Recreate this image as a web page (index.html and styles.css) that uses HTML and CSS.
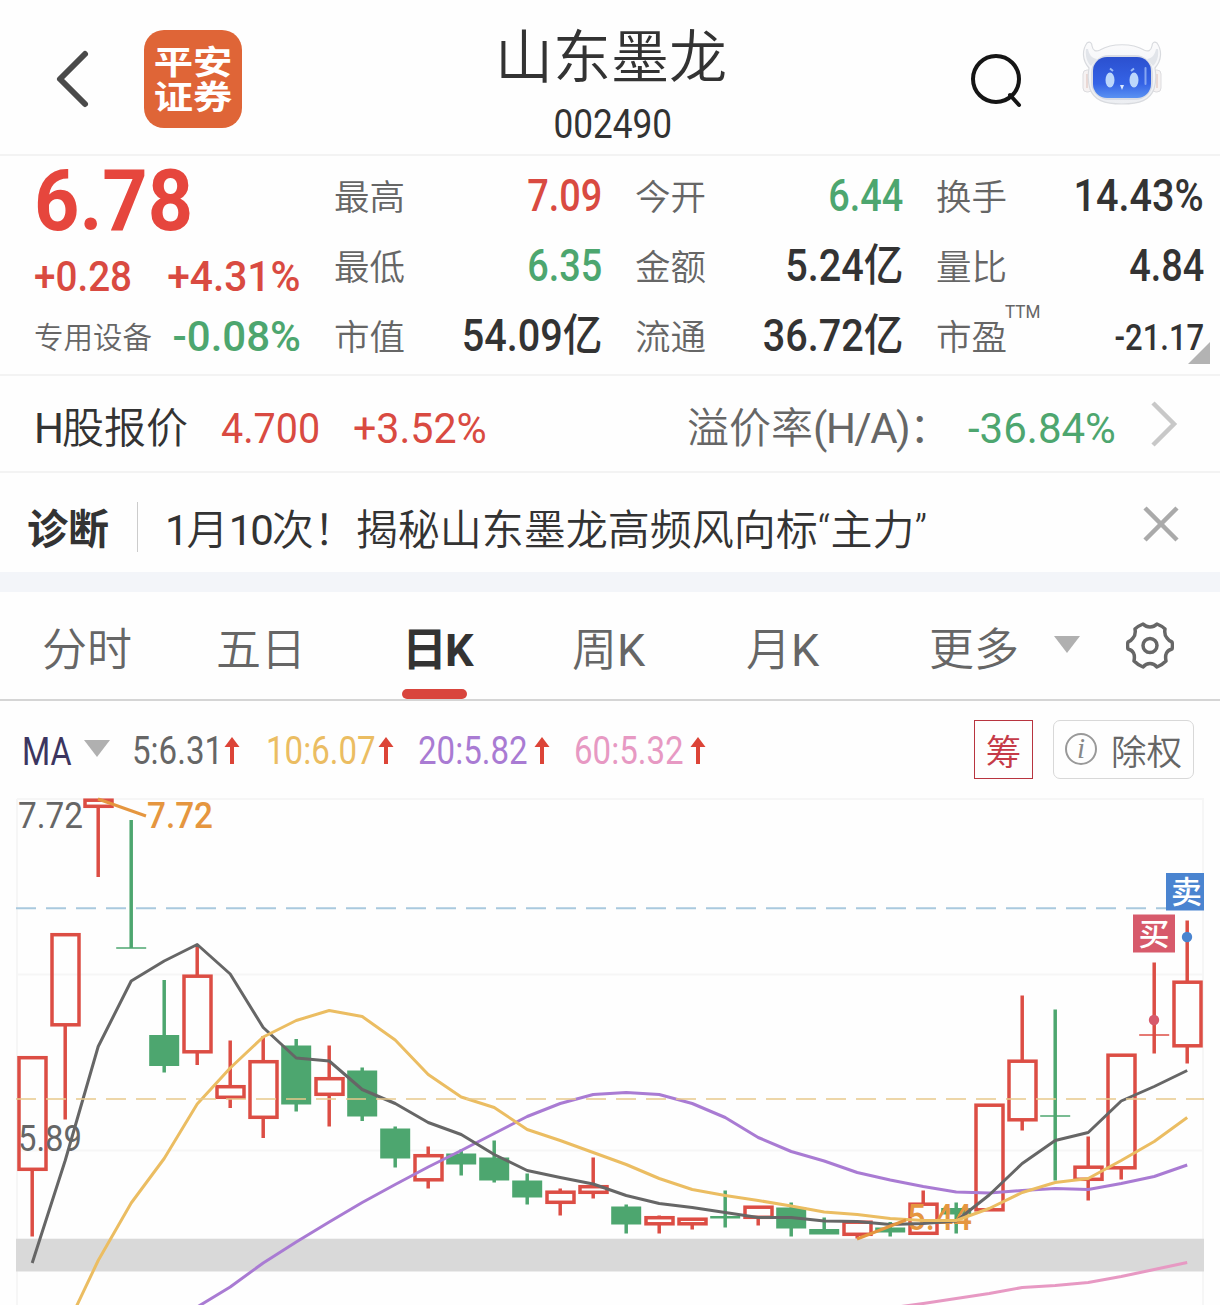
FILE: index.html
```html
<!DOCTYPE html>
<html lang="zh-CN">
<head>
  <meta charset="UTF-8">
  <title>山东墨龙 002490</title>
  <link rel="stylesheet" href="styles.css">
</head>
<body>
  <header class="header">
    <svg class="back" viewBox="0 0 40 64">
      <path d="M33 7 L8 32 L33 57" fill="none" stroke="#4a4a4a" stroke-width="6" stroke-linecap="round" stroke-linejoin="round"/>
    </svg>
    <div class="broker"><span>平安证券</span></div>
    <div class="title">
      <h1>山东墨龙</h1>
      <div class="code num">002490</div>
    </div>
    <svg class="search" viewBox="0 0 54 58">
      <circle cx="27" cy="28" r="23" fill="none" stroke="#151515" stroke-width="4"/>
      <path d="M41 44 L50 54" stroke="#151515" stroke-width="4" stroke-linecap="round"/>
    </svg>
    <svg class="robot" viewBox="0 0 80 66">
      <defs>
        <linearGradient id="face" x1="0" y1="0" x2="0" y2="1">
          <stop offset="0" stop-color="#2b50cf"/>
          <stop offset="0.65" stop-color="#3563e6"/>
          <stop offset="1" stop-color="#5a92f2"/>
        </linearGradient>
        <linearGradient id="shell" x1="0" y1="0" x2="0" y2="1">
          <stop offset="0" stop-color="#fbfbfc"/>
          <stop offset="1" stop-color="#eceef2"/>
        </linearGradient>
      </defs>
      <rect x="1" y="29" width="9" height="22" rx="4" fill="#f6f2f2" stroke="#dcdcdf"/>
      <rect x="70" y="29" width="9" height="22" rx="4" fill="#f6f2f2" stroke="#dcdcdf"/>
      <path d="M5 33 V47 M75 33 V47" stroke="#e6cfca" stroke-width="1.5"/>
      <path d="M5 2 C0 9 0 19 7 27 C6 33 6 42 8 48 C12 59 22 63 40 63 C58 63 68 59 72 48 C74 42 74 33 73 27 C80 19 80 9 75 2 C72 0 70 2 70 5 C69 10 66 11 62 9 C50 2 30 2 18 9 C14 11 11 10 10 5 C10 2 8 0 5 2 Z" fill="url(#shell)" stroke="#d9dbdf" stroke-width="1.2"/>
      <path d="M4 8 C3 15 5 21 9 25 L15 18 C9 17 7 13 6 8 Z M76 8 C77 15 75 21 71 25 L65 18 C71 17 73 13 74 8 Z" fill="#e2e5ea"/>
      <rect x="9" y="14" width="62" height="45" rx="18" fill="#dadde5"/>
      <rect x="11" y="16" width="58" height="41" rx="14" fill="url(#face)"/>
      <ellipse cx="28" cy="39" rx="4.500" ry="7.500" fill="#bcd7fb"/>
      <ellipse cx="52" cy="39" rx="4.500" ry="7.500" fill="#bcd7fb"/>
      <path d="M28 27.500 L31 30 M49 30 L52 27.500" stroke="#9bbaf5" stroke-width="2"/>
      <path d="M38 44 H42 L40 49 Z" fill="#dbe9ff"/>
      <path d="M63.500 27 V43" stroke="#86a6f2" stroke-width="2" stroke-linecap="round"/>
    </svg>
  </header>

  <section class="quote">
    <div class="price">
      <div class="last num red">6.78</div>
      <div class="change num red"><span class="diff">+0.28</span><span class="percent">+4.31%</span></div>
      <div class="sector"><span class="sector-name">专用设备</span><span class="num green">-0.08%</span></div>
    </div>
    <dl class="stats">
      <div><dt>最高</dt><dd class="num red">7.09</dd></div>
      <div><dt>今开</dt><dd class="num green">6.44</dd></div>
      <div><dt>换手</dt><dd class="num wide">14.43%</dd></div>
      <div><dt>最低</dt><dd class="num green">6.35</dd></div>
      <div><dt>金额</dt><dd class="num wide">5.24亿</dd></div>
      <div><dt>量比</dt><dd class="num">4.84</dd></div>
      <div><dt>市值</dt><dd class="num wide">54.09亿</dd></div>
      <div><dt>流通</dt><dd class="num wide">36.72亿</dd></div>
      <div><dt class="pe">市盈<span class="ttm">TTM</span></dt><dd class="num small">-21.17</dd></div>
    </dl>
    <span class="corner"></span>
  </section>

  <section class="hshare">
    <span class="h-label"><span class="num">H</span>股报价</span>
    <span class="h-price num red">4.700</span>
    <span class="h-change num red">+3.52%</span>
    <span class="premium-label">溢价率<span class="num">(H/A)</span>：</span>
    <span class="premium num green">-36.84%</span>
    <svg class="chevron" viewBox="0 0 30 48">
      <path d="M4 3 L25 24 L4 45" fill="none" stroke="#c8c8c8" stroke-width="4.500"/>
    </svg>
  </section>

  <section class="diagnose">
    <strong>诊断</strong>
    <p><span class="num">1</span>月<span class="num">10</span>次！揭秘山东墨龙高频风向标<span class="quot">“</span>主力<span class="quot">”</span></p>
    <svg class="close" viewBox="0 0 36 36">
      <path d="M2 2 L34 34 M34 2 L2 34" stroke="#aaa" stroke-width="4.500"/>
    </svg>
  </section>

  <nav class="tabs">
    <a>分时</a>
    <a>五日</a>
    <a class="active">日<span class="num">K</span></a>
    <a>周<span class="num">K</span></a>
    <a>月<span class="num">K</span></a>
    <a>更多</a>
    <span class="triangle"></span>
    <svg class="gear" viewBox="0 0 48 48">
      <path d="M17 3 Q20 6 24 6 Q28 6 31 3 Q36 5 39 8 Q38 14 41 17 Q43 20 46 21 Q47 24 46 28 Q42 29 40.500 32 Q39 35 40 40 Q36 44 31 46 Q28 42.500 24 42.500 Q20 42.500 17 46 Q12 44 8 40 Q9 35 7.500 32 Q6 29 2 28 Q1 24 2 21 Q5 20 7 17 Q10 14 9 8 Q12 5 17 3 Z" fill="none" stroke="#666" stroke-width="3.500" stroke-linejoin="round"/>
      <circle cx="24" cy="24.500" r="7" fill="none" stroke="#666" stroke-width="3.500"/>
    </svg>
  </nav>

  <div class="ma-row num">
    <span class="ma-name">MA</span>
    <span class="triangle"></span>
    <span class="ma ma5">5:6.31</span>
    <svg class="up" viewBox="0 0 16 28"><path d="M8 6 V28" stroke="#dc4437" stroke-width="4"/><path d="M0.500 11 L8 1 L15.500 11 Z" fill="#dc4437"/></svg>
    <span class="ma ma10">10:6.07</span>
    <svg class="up" viewBox="0 0 16 28"><path d="M8 6 V28" stroke="#dc4437" stroke-width="4"/><path d="M0.500 11 L8 1 L15.500 11 Z" fill="#dc4437"/></svg>
    <span class="ma ma20">20:5.82</span>
    <svg class="up" viewBox="0 0 16 28"><path d="M8 6 V28" stroke="#dc4437" stroke-width="4"/><path d="M0.500 11 L8 1 L15.500 11 Z" fill="#dc4437"/></svg>
    <span class="ma ma60">60:5.32</span>
    <svg class="up" viewBox="0 0 16 28"><path d="M8 6 V28" stroke="#dc4437" stroke-width="4"/><path d="M0.500 11 L8 1 L15.500 11 Z" fill="#dc4437"/></svg>
    <button class="chip-btn">筹</button>
    <button class="rights-btn"><span class="info">i</span>除权</button>
  </div>

  <svg class="chart" id="chart" viewBox="0 798 1220 507"></svg>

  <script src="chart.js"></script>
</body>
</html>
```
FILE: styles.css
```css
* {
  box-sizing: border-box;
}
body {
  margin: 0;
  width: 1220px;
  height: 1305px;
  overflow: hidden;
  background: #fefefe;
  color: #333;
  font-family: "Noto Sans CJK SC", sans-serif;
  font-weight: 350;
}
.num {
  font-family: Roboto, "Noto Sans CJK SC", sans-serif;
  font-weight: 400;
}
.red {
  color: #d94a41;
}
.green {
  color: #4da66f;
}

/* top bar */
.header {
  display: grid;
  grid-template-columns: 92px 98px 727px 113px 1fr;
  height: 156px;
  padding-left: 52px;
  border-bottom: 2px solid #f3f3f3;
}
.back {
  width: 40px;
  height: 64px;
  margin-top: 47px;
}
.broker {
  width: 98px;
  height: 98px;
  margin-top: 30px;
  padding: 13px 16px 0;
  border-radius: 20px;
  background: #df6537;
  color: #fff;
  font-size: 33px;
  font-weight: 700;
  line-height: 35px;
}
.broker span {
  display: block;
  width: 66px;
  transform: scaleX(1.19);
}
.title {
  padding: 16px 0 0 11px;
  text-align: center;
}
.title h1 {
  margin: 0;
  font-size: 58px;
  font-weight: 350;
  line-height: 75px;
}
.code {
  padding-left: 4px;
  font-size: 40px;
  line-height: 67px;
  transform: scaleX(.88);
}
.search {
  width: 54px;
  height: 58px;
  margin-top: 51px;
}
.robot {
  width: 80px;
  height: 66px;
  margin-top: 41px;
}

/* price block */
.quote {
  position: relative;
  display: flex;
  height: 220px;
  padding-left: 34px;
  border-bottom: 2px solid #f3f3f3;
}
.price {
  width: 301px;
}
.last {
  height: 90px;
  color: #e6463d;
  font-size: 86px;
  font-weight: 700;
  line-height: 90px;
  transform: scaleX(.92);
  transform-origin: left;
}
.change,
.sector {
  display: flex;
  justify-content: space-between;
  align-items: center;
  width: 267px;
  height: 60px;
  font-size: 42px;
}
.change,
.sector .num {
  font-weight: 500;
}
.diff {
  transform: scaleX(.92);
  transform-origin: left;
}
.percent {
  transform: scaleX(.97);
  transform-origin: right;
}
.sector-name {
  margin-top: -3px;
  color: #666;
  font-size: 29.500px;
}
.stats {
  display: grid;
  grid-template-columns: repeat(3, 267px);
  grid-template-rows: repeat(3, 70px);
  column-gap: 34px;
  margin: 5px 0 0;
}
.stats > div {
  display: flex;
  justify-content: space-between;
  align-items: center;
}
.stats dt {
  margin-top: -4px;
  margin-left: -1px;
  color: #666;
  font-size: 35.500px;
}
.stats dd {
  margin: 0;
  font-size: 44px;
  font-weight: 500;
  line-height: 52px;
  transform: scaleX(.86);
  transform-origin: right;
}
.stats .wide {
  transform: scaleX(.9);
}
.stats .small {
  margin-top: 3px;
  font-size: 36px;
}
.pe {
  position: relative;
}
.ttm {
  position: absolute;
  left: 69px;
  top: -9px;
  font-family: Roboto, sans-serif;
  font-size: 19px;
  font-weight: 400;
  transform: scaleX(.9);
  transform-origin: left;
}
.corner {
  position: absolute;
  right: 10px;
  bottom: 10px;
  border-left: 22px solid transparent;
  border-bottom: 22px solid #b3b3b3;
}

/* H share row */
.hshare {
  display: grid;
  grid-template-columns: 187px 132px 334px 281px 181px 1fr;
  align-items: center;
  height: 97px;
  padding: 4px 0 0 34px;
  border-bottom: 2px solid #f3f3f3;
  font-size: 42px;
  white-space: nowrap;
}
.h-label,
.premium-label {
  margin-top: -2px;
}
.h-label .num {
  letter-spacing: -2px;
}
.premium-label .num {
  letter-spacing: -1.500px;
}
.h-price,
.h-change,
.premium {
  margin-top: 5px;
  transform-origin: left;
}
.h-price {
  transform: scaleX(.94);
}
.h-change {
  transform: scaleX(.98);
}
.premium-label {
  color: #666;
}
.chevron {
  width: 30px;
  height: 48px;
  margin-top: -4px;
}

/* diagnosis row */
.diagnose {
  display: grid;
  grid-template-columns: 109px 1006px 1fr;
  align-items: center;
  height: 99px;
  padding: 8px 0 0 28px;
  white-space: nowrap;
}
.diagnose strong {
  margin: -2px 0 0 -1px;
  font-size: 41px;
  font-weight: 700;
}
.diagnose p {
  margin: 0;
  padding: 4px 0 0 27px;
  border-left: 1px solid #ccc;
  font-size: 42px;
  line-height: 42px;
}
.diagnose .num {
  letter-spacing: -2px;
}
.quot {
  font-family: Roboto, sans-serif;
}
.close {
  width: 36px;
  height: 36px;
  margin-top: -6px;
}

/* period tabs */
.tabs {
  display: grid;
  grid-template-columns: 174px 186px 170px 174px 183px 125px 72px 1fr;
  align-items: center;
  height: 129px;
  padding-left: 42px;
  border-top: 20px solid #f3f5f9;
  border-bottom: 2px solid #d5d5d5;
  color: #666;
  font-size: 45px;
}
.tabs a {
  height: 107px;
  line-height: 109px;
}
.tabs .active,
.active .num {
  position: relative;
  color: #333;
  font-weight: 700;
}
.active .num {
  left: -2px;
}
.active::after {
  content: "";
  position: absolute;
  left: 0;
  bottom: 0;
  width: 65px;
  height: 10px;
  border-radius: 5px;
  background: #d9453d;
}
.triangle {
  width: 0;
  margin-top: -2px;
  border-left: 13px solid transparent;
  border-right: 13px solid transparent;
  border-top: 17px solid #b0b0b0;
}
.gear {
  width: 48px;
  height: 48px;
  margin-top: -2px;
}

/* moving averages */
.ma-row {
  display: grid;
  grid-template-columns: 62px 48px 92px 42px 112px 40px 116px 40px 116px 284px 79px 141px;
  align-items: center;
  height: 97px;
  padding: 0 0 1px 22px;
  font-size: 38px;
}
.ma-name {
  margin-top: 5px;
  color: #3c3560;
  transform: scaleX(.85);
  transform-origin: left;
}
.ma {
  margin-top: 4px;
  transform: scaleX(.87);
  transform-origin: left;
}
.ma5 { color: #666; }
.ma10 { color: #ebbd62; }
.ma20 { color: #a97bd3; }
.ma60 { color: #e799c3; }
.up {
  width: 16px;
  height: 28px;
  margin-top: 2px;
}
.chip-btn,
.rights-btn {
  height: 59px;
  margin: 0;
  padding: 0;
  background: none;
  font-family: "Noto Sans CJK SC", sans-serif;
  font-size: 35.500px;
  font-weight: 350;
}
.chip-btn {
  width: 59px;
  border: 1.500px solid #b8343f;
  color: #c53a48;
}
.rights-btn {
  display: flex;
  align-items: center;
  justify-content: center;
  gap: 14px;
  border: 1.500px solid #d8d8d8;
  border-radius: 7px;
  color: #666;
}
.info {
  width: 32px;
  height: 32px;
  border: 2px solid #999;
  border-radius: 50%;
  color: #888;
  font: italic 29px/27px "Liberation Serif", serif;
  text-align: center;
}

/* K line chart */
.chart {
  display: block;
  width: 1220px;
  height: 507px;
  overflow: visible;
}
.grid { fill: none; stroke: #f6f6f6; stroke-width: 2; }
.band { fill: #d9d9d9; }
.up-box { fill: none; stroke: #dc4d44; stroke-width: 3.500; }
.up-line { stroke: #dc4d44; stroke-width: 3.500; }
.down-box { fill: #4da66f; }
.down-line { stroke: #4da66f; stroke-width: 3.500; }
.thin { stroke-width: 1.500; }
.dash { stroke-width: 2; stroke-dasharray: 20 10; }
.dash-blue { stroke: #a9c9de; }
.dash-gold { stroke: #e8c98c; stroke-width: 1.700; }
.line { fill: none; stroke-width: 3; stroke-linejoin: round; }
.line5 { stroke: #666; }
.line10 { stroke: #ebbd62; }
.line20 { stroke: #a97bd3; }
.line60 { stroke: #e799c3; }
.leader { stroke: #e5963f; stroke-width: 3; }
.label { font-family: Roboto, sans-serif; font-size: 37px; font-weight: 400; }
.label-axis { fill: #666; }
.label-mark { fill: #e5963f; font-weight: 500; }
.tag { font-family: "Noto Sans CJK SC", sans-serif; font-size: 31px; font-weight: 500; fill: #fff; }
.buy { fill: #d75a6b; }
.sell { fill: #4a84d0; }
```
FILE: chart.js
```js
// [up?, high, top, bottom, low] for each day, as y on the chart
const days = [
  [1, 1056, 1056, 1171, 1236.500],
  [1, 933, 933, 1026.500, 1119.500],
  [1, 798.500, 798.500, 808, 877],
  [0, 820, 948, 948, 948],
  [0, 980, 1035, 1066, 1072.500],
  [1, 944.500, 974.500, 1053.500, 1065],
  [1, 1040.500, 1085, 1099, 1108],
  [1, 1036, 1060, 1119, 1138],
  [0, 1039, 1045.500, 1104.500, 1111.500],
  [1, 1045.500, 1077, 1096, 1126.500],
  [0, 1067.500, 1070.500, 1116.500, 1121],
  [0, 1126.500, 1128.500, 1158.500, 1167.500],
  [1, 1146.500, 1154, 1181.500, 1188.500],
  [0, 1149.500, 1153.500, 1164.500, 1175.500],
  [0, 1140.500, 1157.500, 1180.500, 1182.500],
  [0, 1173.500, 1180.500, 1197.500, 1204.500],
  [1, 1188.500, 1190.500, 1204, 1215.500],
  [1, 1157.500, 1185, 1194, 1198.500],
  [0, 1204.500, 1206.500, 1224.500, 1233.500],
  [1, 1215.500, 1216, 1225.500, 1233.500],
  [1, 1217.500, 1217.500, 1225.500, 1229.500],
  [0, 1190.500, 1216, 1218.500, 1227.500],
  [1, 1205.500, 1205.500, 1219, 1225.500],
  [0, 1202.500, 1207.500, 1228.500, 1236.500],
  [0, 1217.500, 1229, 1234.500, 1234.500],
  [1, 1220.500, 1220.500, 1236, 1238.500],
  [0, 1222, 1227.500, 1232.500, 1236.500],
  [1, 1190.500, 1202.500, 1235, 1235],
  [0, 1202.500, 1208, 1214.500, 1233.500],
  [1, 1103.500, 1103.500, 1211.500, 1211.500],
  [1, 995.500, 1059.500, 1121.500, 1130.500],
  [0, 1009.500, 1116, 1116, 1180.500],
  [1, 1136.500, 1165.500, 1181, 1200.500],
  [1, 1053.500, 1053.500, 1169.500, 1179.500],
  [1, 962.500, 1035, 1035, 1053.500],
  [1, 920.500, 980.500, 1047.500, 1063.500]
];

// moving averages: index of the first day, then one y per day
const averages = [
  ['line20', 5, [1307, 1287, 1263, 1242, 1222, 1202.500, 1184.500, 1167, 1150.500, 1133.500, 1116.500, 1103.500, 1094.500, 1092.500, 1094.500, 1103.500, 1117.500, 1137.500, 1151.500, 1161, 1172.500, 1180, 1186.500, 1192, 1193, 1190.500, 1188.500, 1189.500, 1183.500, 1176.500, 1165]],
  ['line60', 26, [1308, 1303.500, 1298.500, 1293.500, 1287.500, 1285.500, 1282.500, 1276.500, 1269.500, 1262.500]],
  ['line5', 0, [1263, 1160.500, 1046.500, 981, 961, 944.500, 974, 1027.500, 1058, 1061, 1089.500, 1103.500, 1122.500, 1134.500, 1154.500, 1170.500, 1177.500, 1184, 1195.500, 1203.500, 1207.500, 1212.500, 1217.500, 1217.500, 1221, 1221.500, 1224.500, 1223.500, 1221, 1195, 1163.500, 1140.500, 1132.500, 1101, 1086.500, 1070.500]],
  ['line10', 1, [1330, 1260.500, 1203, 1158.500, 1104, 1068, 1037, 1020.500, 1010.500, 1016.500, 1040, 1074.500, 1097, 1107.500, 1129.500, 1140.500, 1152.500, 1164.500, 1178.500, 1189.500, 1195.500, 1200.500, 1206, 1212, 1214.500, 1218.500, 1220.500, 1220.500, 1208.500, 1192.500, 1182.500, 1178.500, 1160.500, 1141.500, 1117.500]]
];

const x = i => 32.200 + i * 33;
const line = (x1, y1, x2, y2, cls) => `<line x1="${x1}" y1="${y1}" x2="${x2}" y2="${y2}" class="${cls}"/>`;

let svg = '<path class="grid" d="M17 799 H1203 V1310 M17 799 V1310 M17 974.500 H1203 M17 1150.500 H1203"/>';
svg += '<rect class="band" x="16" y="1238.700" width="1188" height="32.800"/>';
svg += '<text class="label label-axis" x="18" y="828" textLength="65" lengthAdjust="spacingAndGlyphs">7.72</text>';

days.forEach(([up, high, top, bottom, low], i) => {
  const cls = up ? 'up-line' : 'down-line';
  const c = x(i);
  if (top === bottom) {
    svg += line(c, high, c, low, cls) + line(c - 15, top, c + 15, top, cls + ' thin');
    return;
  }
  // hollow box for a rise, filled box for a fall
  if (high < top) svg += line(c, high, c, top + 1, cls);
  if (low > bottom) svg += line(c, bottom - 1, c, low, cls);
  svg += up
    ? `<rect x="${c - 13.200}" y="${top + 1.700}" width="27" height="${bottom - top - 3.400}" class="up-box"/>`
    : `<rect x="${c - 15}" y="${top}" width="30" height="${bottom - top}" class="down-box"/>`;
});

svg += '<text class="label label-axis" x="18" y="1151" textLength="64" lengthAdjust="spacingAndGlyphs">5.89</text>';
svg += '<text class="label label-mark" x="147" y="828" textLength="66" lengthAdjust="spacingAndGlyphs">7.72</text>';
svg += '<text class="label label-mark" x="907" y="1230" textLength="65" lengthAdjust="spacingAndGlyphs">5.44</text>';

averages.forEach(([cls, first, ys]) => {
  const points = ys.map((y, i) => x(first + i) + ',' + y).join(' ');
  svg += `<polyline class="line ${cls}" points="${points}"/>`;
});

svg += line(98, 799, 146, 816, 'leader') + line(857, 1239, 906, 1220, 'leader');
svg += line(16, 908.300, 1204, 908.300, 'dash dash-blue') + line(16, 1099, 1204, 1099, 'dash dash-gold');

// trade markers
svg += '<rect class="sell" x="1166" y="873" width="38" height="37.500"/><text class="tag" x="1171" y="903">卖</text>';
svg += '<rect class="buy" x="1133" y="914.500" width="42" height="38"/><text class="tag" x="1138.500" y="945">买</text>';
svg += '<circle class="sell" cx="1187" cy="937" r="5.200"/><circle class="buy" cx="1154" cy="1020" r="5.200"/>';

document.getElementById('chart').innerHTML = svg;
```
